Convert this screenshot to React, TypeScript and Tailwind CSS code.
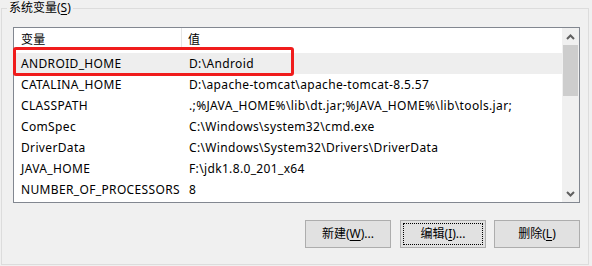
const rows: [string, string][] = [
  ['ANDROID_HOME', 'D:\\Android'],
  ['CATALINA_HOME', 'D:\\apache-tomcat\\apache-tomcat-8.5.57'],
  ['CLASSPATH', '.;%JAVA_HOME%\\lib\\dt.jar;%JAVA_HOME%\\lib\\tools.jar;'],
  ['ComSpec', 'C:\\Windows\\system32\\cmd.exe'],
  ['DriverData', 'C:\\Windows\\System32\\Drivers\\DriverData'],
  ['JAVA_HOME', 'F:\\jdk1.8.0_201_x64'],
  ['NUMBER_OF_PROCESSORS', '8'],
];

const font = { fontFamily: '"Noto Sans", "Noto Sans CJK SC", sans-serif' };

const Arrow = ({ down }: { down?: boolean }) => (
  <svg width="9" height="6" viewBox="0 0 9 6" className={down ? 'rotate-180' : ''}>
    <path d="M1 5 L4.5 1.5 L8 5" fill="none" stroke="#606060" strokeWidth="2" />
  </svg>
);

const Btn = ({ children, focused }: { children: React.ReactNode; focused?: boolean }) => (
  <button className="relative flex h-[28px] w-[86px] items-center justify-center border border-[#adadad] bg-[#e1e1e1] text-[12px] text-black">
    {focused && <span className="absolute inset-[2px] border border-dotted border-black" />}
    <span className="relative">{children}</span>
  </button>
);

export default function App() {
  return (
    <div className="relative h-[266px] w-[592px] overflow-hidden bg-[#f0f0f0] text-[12px] text-black" style={font}>
      <div className="absolute left-[7px] top-0 z-10 bg-[#f0f0f0] px-[2px] leading-[16px]">
        系统变量(<span className="underline underline-offset-2">S</span>)
      </div>
      <div className="ml-[1px] mt-[8px] flex h-[257px] w-[588px] flex-col border border-[#dcdcdc] pl-[11px] pr-[8px] pt-[18px]">
        <div className="relative flex h-[176px] w-[567px] border border-[#828790] bg-white">
          <div className="flex w-[548px] flex-col overflow-hidden tracking-[0.35px]">
            <div className="flex h-[25px] shrink-0">
              <div className="flex h-[21px] w-[168px] items-center border-r border-[#e5e5e5] pl-[7px] pt-[3px]">变量</div>
              <div className="flex h-[21px] items-center pl-[6px] pt-[3px]">值</div>
            </div>
            {rows.map(([k, v], i) => (
              <div key={k} className={`flex h-[21px] shrink-0 items-center ${i === 0 ? 'bg-[#eeeeee]' : ''}`}>
                <div className="w-[169px] pl-[7px] whitespace-nowrap">{k}</div>
                <div className="pl-[6px] whitespace-nowrap">{v}</div>
              </div>
            ))}
          </div>
          <div className="flex w-[17px] flex-col bg-[#f0f0f0]">
            <div className="flex h-[17px] items-center justify-center"><Arrow /></div>
            <div className="mx-[1px] h-[51px] bg-[#cdcdcd]" />
            <div className="flex-1" />
            <div className="flex h-[17px] items-center justify-center"><Arrow down /></div>
          </div>
          <div className="absolute left-[-1px] top-[19px] h-[29px] w-[281px] rounded-[3px] border-[3px] border-[#f01c1c]" />
        </div>
        <div className="mt-[17px] flex justify-end">
          <Btn>新建(<span className="underline underline-offset-2">W</span>)...</Btn>
          <div className="w-[9px]" />
          <Btn focused>编辑(<span className="underline underline-offset-2">I</span>)...</Btn>
          <div className="w-[8px]" />
          <Btn>删除(<span className="underline underline-offset-2">L</span>)</Btn>
        </div>
      </div>
    </div>
  );
}
